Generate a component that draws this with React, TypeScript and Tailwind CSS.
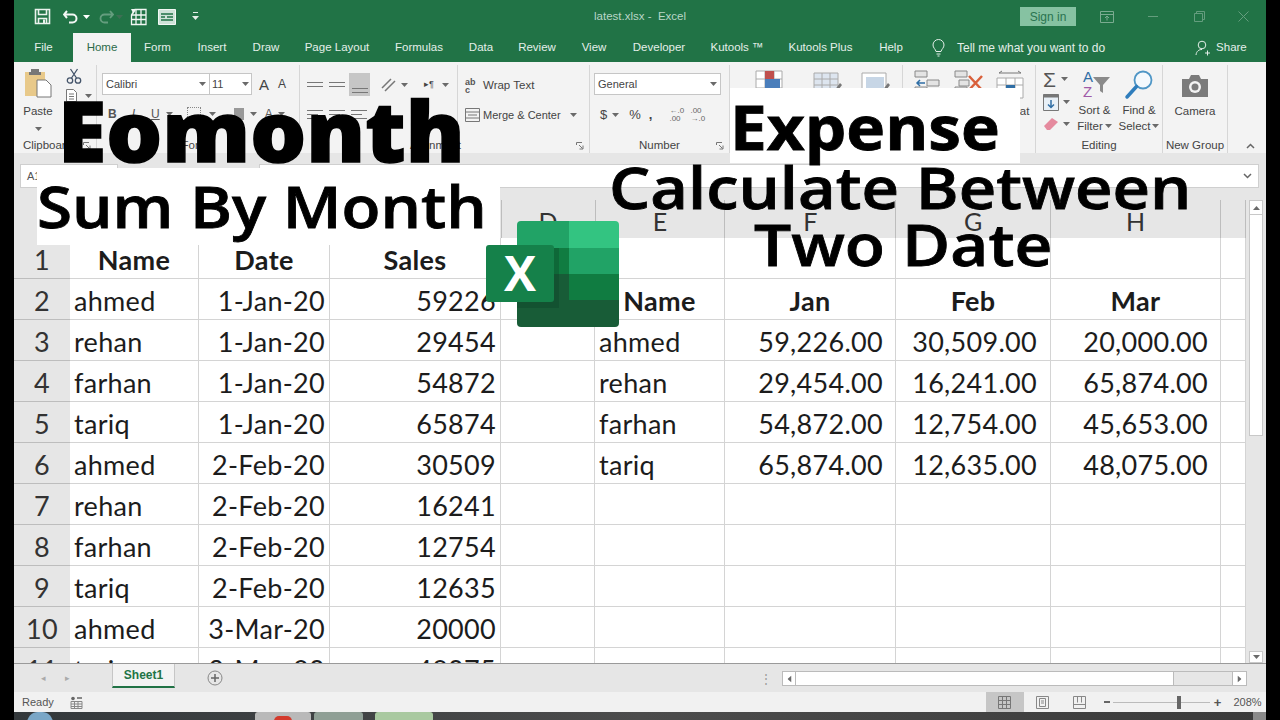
import type { ReactNode } from 'react'

const ui = "font-['Liberation_Sans',Arial,sans-serif]"
const cell = "font-['Lato','Liberation_Sans',sans-serif]"

const tabs = [
  { label: 'File', w: 'w-[59px]' },
  { label: 'Home', w: 'w-[58px]', active: true },
  { label: 'Form', w: 'w-[53px]' },
  { label: 'Insert', w: 'w-[56px]' },
  { label: 'Draw', w: 'w-[52px]' },
  { label: 'Page Layout', w: 'w-[90px]' },
  { label: 'Formulas', w: 'w-[74px]' },
  { label: 'Data', w: 'w-[50px]' },
  { label: 'Review', w: 'w-[62px]' },
  { label: 'View', w: 'w-[52px]' },
  { label: 'Developer', w: 'w-[78px]' },
  { label: 'Kutools ™', w: 'w-[78px]' },
  { label: 'Kutools Plus', w: 'w-[89px]' },
  { label: 'Help', w: 'w-[52px]' },
]

const columns = [
  { label: 'D', w: 'w-[94px]' },
  { label: 'E', w: 'w-[130px]' },
  { label: 'F', w: 'w-[171px]' },
  { label: 'G', w: 'w-[155px]' },
  { label: 'H', w: 'w-[170px]' },
  { label: '', w: 'w-[25px]' },
]

const sales = [
  ['ahmed', '1-Jan-20', '59226'],
  ['rehan', '1-Jan-20', '29454'],
  ['farhan', '1-Jan-20', '54872'],
  ['tariq', '1-Jan-20', '65874'],
  ['ahmed', '2-Feb-20', '30509'],
  ['rehan', '2-Feb-20', '16241'],
  ['farhan', '2-Feb-20', '12754'],
  ['tariq', '2-Feb-20', '12635'],
  ['ahmed', '3-Mar-20', '20000'],
  ['tariq', '3-Mar-20', '48075'],
]

const summary = [
  ['ahmed', '59,226.00', '30,509.00', '20,000.00'],
  ['rehan', '29,454.00', '16,241.00', '65,874.00'],
  ['farhan', '54,872.00', '12,754.00', '45,653.00'],
  ['tariq', '65,874.00', '12,635.00', '48,075.00'],
]

function Caret({ className = '' }: { className?: string }) {
  return (
    <svg width="7" height="4" viewBox="0 0 7 4" className={className}>
      <path d="M0 0h7L3.5 4z" fill="#6a6a6a" />
    </svg>
  )
}

function Lines({ bars }: { bars: number[] }) {
  return (
    <div className="flex w-[16px] flex-col gap-[3px]">
      {bars.map((b, i) => (
        <div key={i} className={b === 1 ? 'h-px w-full bg-[#777]' : 'h-px w-[11px] bg-[#777]'} />
      ))}
    </div>
  )
}

function Group({
  label,
  width,
  labelPad = '',
  launcher = false,
  children,
}: {
  label: string
  width: string
  labelPad?: string
  launcher?: boolean
  children: ReactNode
}) {
  return (
    <div className={width + ' flex h-[88px] flex-col border-r border-[#d6d6d6]'}>
      <div className="h-[72px] overflow-hidden">{children}</div>
      <div className={'relative h-[16px] text-center text-[11.5px] leading-[16px] text-[#444] ' + labelPad}>
        {label}
        {launcher && (
          <svg width="8" height="8" viewBox="0 0 8 8" className="absolute bottom-[3px] right-[5px]">
            <path d="M.5 3V.5H6M3 3l3.5 3.5M3.5 7H7V3.5" fill="none" stroke="#777" />
          </svg>
        )}
      </div>
    </div>
  )
}

function TitleBar() {
  return (
    <div className="flex h-[33px] items-center bg-[#217346] text-white">
      <svg width="17" height="17" viewBox="0 0 17 17" className="ml-[20px]">
        <path d="M1.5 1.5h14v14h-14zM4.5 1.5v5h8v-5M4.5 15.5v-5h8v5" fill="none" stroke="#e9f3ed" strokeWidth="1.6" />
        <path d="M9 11.5h2v4H9z" fill="#e9f3ed" />
      </svg>
      <svg width="18" height="14" viewBox="0 0 18 14" className="ml-[12px]">
        <path d="M4 1L1 4.5 4 8M1 4.5h8.5a3.8 3.8 0 0 1 0 8H6" fill="none" stroke="#f2f7f4" strokeWidth="2" />
      </svg>
      <Caret className="ml-[2px] brightness-[3]" />
      <svg width="16" height="14" viewBox="0 0 16 14" className="ml-[8px] opacity-30">
        <path d="M12 1l3 3.5L12 8M15 4.5H6.5a3.8 3.8 0 0 0 0 8H10" fill="none" stroke="#fff" strokeWidth="1.8" />
      </svg>
      <Caret className="ml-[2px] opacity-40" />
      <svg width="17" height="18" viewBox="0 0 17 18" className="ml-[7px]">
        <path d="M5 1.5h11v15H1.5V7zM1.5 7H16M1.5 11.5H16M6 1.5v15M11 1.5v15" fill="none" stroke="#f2f7f4" strokeWidth="1.3" />
        <path d="M1 1h5L3.5 6z" fill="#f2f7f4" />
      </svg>
      <svg width="18" height="16" viewBox="0 0 18 16" className="ml-[11px]">
        <path d="M.5.5h17v15H.5z" fill="#cfe3d8" stroke="#f2f7f4" />
        <path d="M3 5h12M3 8h4M9 8h6M3 11h12" stroke="#217346" strokeWidth="1.4" />
      </svg>
      <svg width="7" height="9" viewBox="0 0 7 9" className="ml-[16px]">
        <path d="M1 0h5v1H1zM0 4h7L3.5 8z" fill="#e3efe8" />
      </svg>
      <div className="ml-[395px] whitespace-nowrap text-[11.5px] text-[#b9d6c6]">latest.xlsx&nbsp;- &nbsp;Excel</div>
      <div className="ml-[334px] flex h-[19px] w-[56px] items-center justify-center bg-[#86c2a2] text-[12px] text-[#2a7450]">
        Sign in
      </div>
      <svg width="14" height="12" viewBox="0 0 14 12" className="ml-[24px] opacity-40">
        <path d="M.5.5h13v11H.5zM.5 3.5h13M7 9.5V5M5 7l2-2 2 2" fill="none" stroke="#fff" />
      </svg>
      <div className="ml-[34px] h-px w-[10px] bg-white opacity-30" />
      <svg width="11" height="11" viewBox="0 0 11 11" className="ml-[36px] opacity-30">
        <path d="M.5 2.5h8v8h-8zM2.5 2.5v-2h8v8h-2" fill="none" stroke="#fff" />
      </svg>
      <svg width="11" height="11" viewBox="0 0 11 11" className="ml-[33px] opacity-30">
        <path d="M.5.5l10 10M10.500.5l-10 10" fill="none" stroke="#fff" />
      </svg>
    </div>
  )
}

function TabRow() {
  return (
    <div className="flex h-[29px] bg-[#217346] text-[11.5px] text-[#e4efe9]">
      {tabs.map(t => (
        <div
          key={t.label}
          className={
            t.w +
            ' flex items-center justify-center whitespace-nowrap ' +
            (t.active ? 'bg-[#f3f3f3] text-[#2c6a49]' : '')
          }
        >
          {t.label}
        </div>
      ))}
      <div className="flex items-center">
        <svg width="13" height="18" viewBox="0 0 13 18" className="ml-[15px]">
          <path d="M4 12.5C3.500 10 1 9 1 6a5.500 5.500 0 0 1 11 0c0 3-2.500 4-3 6.500zM4.500 15h4M5.500 17h2" fill="none" stroke="#e4efe9" />
        </svg>
        <span className="ml-[12px] whitespace-nowrap text-[12px]">Tell me what you want to do</span>
        <svg width="16" height="16" viewBox="0 0 16 16" className="ml-[90px]">
          <circle cx="7" cy="5" r="3.8" fill="none" stroke="#e4efe9" />
          <path d="M1 15c.5-4 3-5.500 6-5.500M10 13h5M12.500 10.500v5" fill="none" stroke="#e4efe9" />
        </svg>
        <span className="ml-[5px] text-[11.5px]">Share</span>
      </div>
    </div>
  )
}

function Ribbon() {
  return (
    <div className={'flex h-[91px] bg-[#f3f3f3] pt-[3px] text-[#444] ' + ui}>
      <Group label="Clipboard" width="w-[83px]" labelPad="pr-[15px]" launcher>
        <div className="flex">
          <div className="flex w-[48px] flex-col items-center pt-[3px]">
            <svg width="28" height="30" viewBox="0 0 28 30">
              <path d="M1 4h20v24H1z" fill="#e8c98a" />
              <path d="M7 4h8V1h-8zM5 4h12v3H5z" fill="#777" />
              <path d="M13 12h9l5 5v12H13z" fill="#fff" stroke="#777" />
            </svg>
            <span className="mt-[5px] text-[11.5px]">Paste</span>
            <Caret className="mt-[7px]" />
          </div>
          <div className="flex flex-col pt-[3px] pl-[4px]">
            <svg width="16" height="16" viewBox="0 0 16 16">
              <circle cx="4" cy="12.5" r="2.7" fill="none" stroke="#44546a" strokeWidth="1.3" />
              <circle cx="12" cy="12.5" r="2.7" fill="none" stroke="#44546a" strokeWidth="1.3" />
              <path d="M5.500 10L11.500 1M10.500 10L4.500 1" fill="none" stroke="#44546a" strokeWidth="1.3" />
            </svg>
            <div className="mt-[5px] flex items-center gap-[4px]">
              <svg width="15" height="14" viewBox="0 0 15 14">
                <path d="M.5.5h7l3 3v9H.5zM3 5h5M3 7.500h5M3 10h5" fill="#fff" stroke="#777" />
              </svg>
              <Caret />
            </div>
          </div>
        </div>
      </Group>

      <Group label="Font" width="w-[203px]" labelPad="pr-[10px]" launcher>
        <div className="mt-[8px] flex h-[22px] items-center pl-[5px]">
          <div className="flex h-[22px] w-[108px] items-center justify-between border border-[#c6c6c6] bg-white px-[3px] text-[11px]">
            Calibri
            <Caret />
          </div>
          <div className="flex h-[22px] w-[42px] items-center justify-between border border-l-0 border-[#c6c6c6] bg-white px-[2px] text-[11px]">
            11
            <Caret />
          </div>
          <span className="ml-[7px] text-[15px] leading-none">A</span>
          <span className="ml-[9px] text-[12px] leading-none">A</span>
        </div>
        <div className="mt-[10px] flex items-center pl-[10px] text-[12px] text-[#555]">
          <b className="ml-[1px]">B</b>
          <i className="ml-[15px]">I</i>
          <u className="ml-[16px]">U</u>
          <Caret className="ml-[6px]" />
          <div className="ml-[14px] h-[14px] w-[14px] border border-dotted border-[#888]" />
          <Caret className="ml-[8px]" />
          <div className="ml-[18px] h-[12px] w-[10px] bg-[#999]" />
          <Caret className="ml-[6px]" />
          <span className="ml-[8px]">A</span>
          <Caret className="ml-[5px]" />
        </div>
      </Group>

      <Group label="Alignment" width="w-[290px]" labelPad="pr-[18px]" launcher>
        <div className="flex">
          <div className="w-[157px]">
            <div className="mt-[8px] flex h-[23px] items-center pl-[7px]">
              <Lines bars={[1, 1]} />
              <div className="ml-[6px]">
                <Lines bars={[1, 1]} />
              </div>
              <div className="ml-[4px] flex h-[23px] w-[21px] items-end justify-center bg-[#c6c6c6] pb-[3px]">
                <Lines bars={[1, 1]} />
              </div>
              <svg width="17" height="15" viewBox="0 0 17 15" className="ml-[11px]">
                <path d="M1 11L10 2M4 14L14 4" fill="none" stroke="#777" strokeWidth="1.5" />
              </svg>
              <Caret className="ml-[3px]" />
              <span className="ml-[16px] text-[9px]">▸¶</span>
              <Caret className="ml-[8px]" />
            </div>
            <div className="mt-[11px] flex h-[14px] items-center pl-[7px]">
              <Lines bars={[1, 0, 1]} />
              <div className="ml-[6px]">
                <Lines bars={[1, 0, 1]} />
              </div>
              <div className="ml-[6px]">
                <Lines bars={[1, 0, 1]} />
              </div>
            </div>
          </div>
          <div className="h-[64px] border-l border-[#d6d6d6] pl-[7px]">
            <div className="mt-[12px] flex h-[18px] items-center">
              <span className="w-[15px] text-[9px] font-bold leading-[8px] text-[#555]">ab c</span>
              <span className="ml-[3px] text-[11.5px]">Wrap Text</span>
            </div>
            <div className="mt-[11px] flex h-[18px] items-center">
              <svg width="15" height="14" viewBox="0 0 15 14">
                <path d="M.5.5h14v13H.5zM.5 4h14M.5 10h14M3 7h9" fill="none" stroke="#777" />
              </svg>
              <span className="ml-[3px] whitespace-nowrap text-[11px]">Merge &amp; Center</span>
              <Caret className="ml-[9px]" />
            </div>
          </div>
        </div>
      </Group>

      <Group label="Number" width="w-[140px]" launcher>
        <div className="ml-[4px] mt-[8px] flex h-[22px] w-[127px] items-center justify-between border border-[#c6c6c6] bg-white px-[3px] text-[11px]">
          General
          <Caret />
        </div>
        <div className="mt-[10px] flex h-[20px] items-center pl-[10px] text-[13px]">
          <span>$</span>
          <Caret className="ml-[5px]" />
          <span className="ml-[10px]">%</span>
          <b className="ml-[8px]">,</b>
          <span className="ml-[17px] w-[18px] text-[8px] leading-[8px] text-[#666]">←.0 .00</span>
          <span className="ml-[3px] w-[18px] text-[8px] leading-[8px] text-[#666]">.00 →.0</span>
        </div>
      </Group>

      <Group label="Styles" width="w-[173px]">
        <div className="flex pl-[25px] pt-[5px]">
          <svg width="28" height="28" viewBox="0 0 28 28">
            <path d="M1 1h26v26H1zM1 9h26M1 18h26M10 1v26M19 1v26" fill="#fff" stroke="#aaa" />
            <path d="M10 1h9v8h-9z" fill="#c0504d" />
            <path d="M10 9h15v9H10z" fill="#4a7ebb" />
            <path d="M10 18h8v9h-8z" fill="#c0504d" />
          </svg>
          <svg width="30" height="28" viewBox="0 0 30 28" className="ml-[30px]">
            <path d="M1 3h24v22H1zM1 9h24M1 15h24M9 3v22M17 3v22" fill="#dde5ef" stroke="#aaa" />
            <path d="M18 25l9-12 2 2-9 12z" fill="#777" />
          </svg>
          <svg width="30" height="28" viewBox="0 0 30 28" className="ml-[18px]">
            <path d="M1 3h24v22H1z" fill="#fff" stroke="#aaa" />
            <path d="M5 7h18v15H5z" fill="#c7d6e6" />
            <path d="M18 25l9-12 2 2-9 12z" fill="#777" />
          </svg>
        </div>
      </Group>

      <Group label="Cells" width="w-[133px]">
        <div className="flex pl-[11px] pt-[5px]">
          <svg width="27" height="24" viewBox="0 0 27 24">
            <path d="M1 1h12v6H1zM1 17h12v6H1zM13 10h12v6H13z" fill="#e4e4e4" stroke="#888" />
            <path d="M11 13H3M6 10l-3 3 3 3" fill="none" stroke="#2f6ea5" strokeWidth="1.5" />
          </svg>
          <svg width="30" height="24" viewBox="0 0 30 24" className="ml-[13px]">
            <path d="M1 1h12v6H1zM1 17h12v6H1zM5 10h10v6H5z" fill="#e4e4e4" stroke="#888" />
            <path d="M15 6l13 14M28 6L15 20" stroke="#d9603b" strokeWidth="2.5" />
          </svg>
          <svg width="28" height="30" viewBox="0 0 28 30" className="ml-[12px]">
            <path d="M1 8h26v20H1zM1 15h26M10 8v20M19 8v20" fill="#fff" stroke="#aaa" />
            <path d="M10 15h9v9h-9z" fill="#2f6ea5" />
            <path d="M3 3h22M3 3l3-2M25 3l-3-2" fill="none" stroke="#777" />
          </svg>
        </div>
        <div className="mt-[3px] pl-[90px] text-[11.5px]">Format</div>
      </Group>

      <Group label="Editing" width="w-[127px]">
        <div className="flex">
          <div className="flex w-[35px] flex-col pl-[7px] pt-[3px]">
            <div className="flex h-[22px] items-center">
              <span className="text-[21px] leading-none text-[#555]">Σ</span>
              <Caret className="ml-[5px]" />
            </div>
            <div className="flex h-[24px] items-center">
              <svg width="16" height="17" viewBox="0 0 16 17">
                <path d="M.5.5h15v16H.5z" fill="#e8f0f7" stroke="#777" />
                <path d="M.5.5h15v3H.5z" fill="#777" />
                <path d="M8 6v7M5 10.500l3 3 3-3" fill="none" stroke="#2f6ea5" strokeWidth="1.5" />
              </svg>
              <Caret className="ml-[4px]" />
            </div>
            <div className="flex h-[20px] items-center">
              <svg width="16" height="14" viewBox="0 0 16 14">
                <path d="M1 9l8-8 6 4-8 8H4z" fill="#e58a9e" />
              </svg>
              <Caret className="ml-[4px]" />
            </div>
          </div>
          <div className="flex w-[47px] flex-col items-center pt-[4px]">
            <svg width="30" height="30" viewBox="0 0 30 30">
              <text x="3" y="13" fontSize="15" fontFamily="Liberation Sans" fill="#2f6ea5">A</text>
              <text x="3" y="28" fontSize="15" fontFamily="Liberation Sans" fill="#a05aa8">Z</text>
              <path d="M13 8h17l-7 8v8l-3-2v-6z" fill="#8a8a8a" />
            </svg>
            <span className="mt-[3px] whitespace-nowrap text-[11.5px] leading-[16px]">Sort &amp;</span>
            <span className="flex items-center whitespace-nowrap text-[11.5px] leading-[16px]">
              Filter
              <Caret className="ml-[2px]" />
            </span>
          </div>
          <div className="flex w-[42px] flex-col items-center pt-[4px]">
            <svg width="30" height="32" viewBox="0 0 30 32">
              <circle cx="19" cy="11" r="8.5" fill="#f4f9fd" stroke="#4f96c6" strokeWidth="1.8" />
              <path d="M12.500 17.500L3 28" stroke="#2f7dbc" strokeWidth="3.5" strokeLinecap="round" />
            </svg>
            <span className="mt-[1px] whitespace-nowrap text-[11.5px] leading-[16px]">Find &amp;</span>
            <span className="flex items-center whitespace-nowrap text-[11.5px] leading-[16px]">
              Select
              <Caret className="ml-[2px]" />
            </span>
          </div>
        </div>
      </Group>

      <div className="flex h-[88px] w-[65px] flex-col items-center border-r border-[#d6d6d6]">
        <div className="h-[72px] pt-[9px] text-center">
          <svg width="28" height="24" viewBox="0 0 28 24" className="mx-auto">
            <path d="M1 5h7l2-4h8l2 4h7v18H1z" fill="#7b7b7b" />
            <circle cx="14" cy="13" r="6" fill="#f3f3f3" />
            <circle cx="14" cy="13" r="3.5" fill="#7b7b7b" />
          </svg>
          <div className="mt-[5px] text-[11.5px]">Camera</div>
        </div>
        <div className="h-[16px] whitespace-nowrap text-[11.5px] leading-[16px]">New Group</div>
      </div>

      <div className="flex h-[88px] flex-1 items-end justify-end pb-[4px] pr-[11px]">
        <svg width="9" height="6" viewBox="0 0 9 6">
          <path d="M1 5l3.500-3.500L8 5" fill="none" stroke="#666" strokeWidth="1.5" />
        </svg>
      </div>
    </div>
  )
}

function FormulaBar() {
  return (
    <div className={'flex h-[35px] bg-[#e6e6e6] pt-[11px] text-[11px] text-[#555] ' + ui}>
      <div className="ml-[6px] flex h-[24px] w-[98px] items-center border border-[#cfcfcf] bg-white pl-[6px]">A1</div>
      <div className="ml-[141px] flex h-[24px] w-[1000px] items-center justify-end border border-[#cfcfcf] bg-white pr-[6px]">
        <svg width="9" height="6" viewBox="0 0 9 6">
          <path d="M1 1l3.500 3.500L8 1" fill="none" stroke="#666" strokeWidth="1.5" />
        </svg>
      </div>
    </div>
  )
}

function Sheet() {
  return (
    <div className={'flex h-[475px] bg-[#e6e6e6] ' + cell}>
      <div className="mt-[12px] w-[1232px] overflow-hidden">
        <div className="flex h-[38px] text-[25px] text-[#333]">
          <div className="w-[186px]" />
          <div className="w-[131px]" />
          <div className="w-[171px] border-r border-[#bdbdbd]" />
          {columns.map(c => (
            <div key={c.w + c.label} className={c.w + ' flex items-end justify-center border-r border-[#bdbdbd] leading-[34px]'}>
              {c.label}
            </div>
          ))}
        </div>
        {Array.from({ length: 11 }, (_, i) => (
          <SheetRow key={i} index={i} />
        ))}
      </div>
      <Scrollbar />
    </div>
  )
}

function Td({ w, children, className = '' }: { w: string; children?: ReactNode; className?: string }) {
  return (
    <div className={w + ' flex h-full items-center border-r border-b border-[#d4d4d4] bg-white pt-[4px] whitespace-nowrap ' + className}>
      {children}
    </div>
  )
}

function SheetRow({ index }: { index: number }) {
  const row = index === 0 ? null : sales[index - 1]
  const side = index >= 2 ? summary[index - 2] : null
  const head = index === 1
  return (
    <div className="flex h-[41px] text-[27px] tracking-[0.3px] text-[#1c1c1c]">
      <div className="flex h-full w-[56px] items-center justify-center border-b border-[#bdbdbd] pt-[4px] text-[#333]">{index + 1}</div>
      <Td w="w-[129px]" className={row ? 'pl-[4px]' : 'justify-center font-bold'}>{row ? row[0] : 'Name'}</Td>
      <Td w="w-[131px]" className={row ? 'justify-end pr-[4px]' : 'justify-center font-bold'}>{row ? row[1] : 'Date'}</Td>
      <Td w="w-[171px]" className={row ? 'justify-end pr-[4px]' : 'justify-center font-bold'}>{row ? row[2] : 'Sales'}</Td>
      <Td w="w-[94px]" />
      <Td w="w-[130px]" className={head ? 'justify-center font-bold' : 'pl-[4px]'}>{head ? 'Name' : side?.[0]}</Td>
      <Td w="w-[171px]" className={head ? 'justify-center font-bold' : 'justify-end pr-[12px]'}>{head ? 'Jan' : side?.[1]}</Td>
      <Td w="w-[155px]" className={head ? 'justify-center font-bold' : 'justify-end pr-[13px]'}>{head ? 'Feb' : side?.[2]}</Td>
      <Td w="w-[170px]" className={head ? 'justify-center font-bold' : 'justify-end pr-[12px]'}>{head ? 'Mar' : side?.[3]}</Td>
      <Td w="w-[25px]" />
    </div>
  )
}

function Scrollbar() {
  return (
    <div className="ml-[3px] mt-[12px] flex h-[463px] w-[14px] flex-col">
      <div className="flex h-[15px] items-center justify-center border border-[#c8c8c8] bg-white">
        <Caret className="rotate-180" />
      </div>
      <div className="h-[221px] border-x border-b border-[#c8c8c8] bg-white" />
      <div className="flex-1" />
      <div className="flex h-[12px] items-center justify-center border border-[#c8c8c8] bg-white">
        <Caret />
      </div>
    </div>
  )
}

function SheetTabs() {
  return (
    <div className={'flex h-[29px] items-start border-t border-[#9a9a9a] bg-[#e6e6e6] ' + ui}>
      <span className="ml-[27px] mt-[8px] text-[9px] text-[#aaa]">◂</span>
      <span className="ml-[19px] mt-[8px] text-[9px] text-[#aaa]">▸</span>
      <div className="ml-[42px] flex h-[24px] w-[63px] items-center justify-center border-x border-b-2 border-[#c6c6c6] border-b-[#217346] bg-[#f3f3f3] text-[12px] font-bold text-[#217346]">
        Sheet1
      </div>
      <svg width="16" height="16" viewBox="0 0 16 16" className="ml-[32px] mt-[6px]">
        <circle cx="8" cy="8" r="7" fill="none" stroke="#888" />
        <path d="M8 4v8M4 8h8" stroke="#666" strokeWidth="1.5" />
      </svg>
      <span className="ml-[537px] mt-[8px] text-[12px] leading-[14px] text-[#999]">⋮</span>
      <div className="ml-[10px] mt-[7px] flex h-[15px] w-[465px] items-stretch border border-[#bbb]">
        <div className="flex w-[13px] items-center justify-center border-r border-[#bbb] bg-white">
          <Caret className="rotate-90" />
        </div>
        <div className="w-[378px] border-r border-[#bbb] bg-white" />
        <div className="flex-1" />
        <div className="flex w-[14px] items-center justify-center border-l border-[#bbb] bg-white">
          <Caret className="-rotate-90" />
        </div>
      </div>
    </div>
  )
}

function StatusBar() {
  return (
    <div className={'flex h-[20px] items-center bg-[#f1f1f1] text-[11px] text-[#555] ' + ui}>
      <span className="ml-[8px]">Ready</span>
      <svg width="13" height="13" viewBox="0 0 13 13" className="ml-[16px]">
        <path d="M1 5.500h11v7H1zM1 8h11M1 10.500h11M4.500 5.500v7M8 5.500v7" fill="none" stroke="#888" />
        <circle cx="3" cy="2.5" r="1.8" fill="#666" />
        <path d="M7 1h5v2H7z" fill="#888" />
      </svg>
      <div className="ml-[903px] flex h-full w-[38px] items-center justify-center bg-[#c6c6c6]">
        <svg width="13" height="13" viewBox="0 0 13 13">
          <path d="M.5.5h12v12H.5zM.5 4.500h12M.5 8.500h12M4.500.5v12M8.500.5v12" fill="none" stroke="#777" />
        </svg>
      </div>
      <svg width="13" height="13" viewBox="0 0 13 13" className="ml-[12px]">
        <path d="M.5.5h12v12H.5z" fill="none" stroke="#888" />
        <path d="M3.500 2.500h6v8h-6zM5 5h3M5 7h3" fill="none" stroke="#888" />
      </svg>
      <svg width="13" height="13" viewBox="0 0 13 13" className="ml-[24px]">
        <path d="M.5.5h12v12H.5zM.5 8.500h12M4.500.5v6M8.500.5v6" fill="none" stroke="#888" />
      </svg>
      <div className="ml-[18px] h-[2px] w-[6px] bg-[#666]" />
      <div className="relative ml-[3px] h-px w-[97px] bg-[#bbb]">
        <div className="absolute left-[64px] top-[-6px] h-[13px] w-[4px] bg-[#666]" />
      </div>
      <span className="ml-[4px] text-[13px] font-bold leading-none text-[#555]">+</span>
      <span className="ml-[12px] text-[11px]">208%</span>
    </div>
  )
}

function Taskbar() {
  return (
    <div className="flex h-[8px] overflow-hidden bg-gradient-to-r from-[#33383b] via-[#4c4c4c] to-[#3a3a3a]">
      <div className="ml-[13px] h-[22px] w-[26px] rounded-full bg-[#7aa7c7]" />
      <div className="ml-[202px] flex h-full w-[56px] justify-center rounded-t-[3px] bg-[#b9b9b9]">
        <div className="mt-[4px] h-[10px] w-[18px] rounded-full bg-[#d33a2c]" />
      </div>
      <div className="ml-[3px] h-full w-[49px] rounded-t-[3px] bg-[#8f9f95]" />
      <div className="ml-[12px] h-full w-[58px] rounded-t-[3px] bg-[#a9c9a0]" />
      <div className="ml-auto h-full w-[13px] bg-[#8a8a8a]" />
    </div>
  )
}

function ExcelLogo() {
  return (
    <svg width="135" height="107" viewBox="0 0 135 107" className="absolute left-[486px] top-[221px]">
      <defs>
        <clipPath id="sheet">
          <rect x="31" y="0" width="102" height="106" rx="4" />
        </clipPath>
      </defs>
      <g clipPath="url(#sheet)">
        <path d="M31 0h52v27H31z" fill="#21a366" />
        <path d="M83 0h50v27H83z" fill="#33c481" />
        <path d="M31 27h52v26H31z" fill="#107c41" />
        <path d="M83 27h50v26H83z" fill="#21a366" />
        <path d="M31 53h52v26H31z" fill="#185c37" />
        <path d="M83 53h50v26H83z" fill="#107c41" />
        <path d="M31 79h102v27H31z" fill="#185c37" />
        <path d="M31 27h42v60H31z" fill="#0b3d23" opacity="0.3" />
      </g>
      <rect x="0" y="24" width="68" height="57" rx="3" fill="#15814a" />
      <text x="34" y="70" textAnchor="middle" fontSize="48" fontWeight="700" fontFamily="Open Sans" fill="#fff">X</text>
    </svg>
  )
}

export default function App() {
  const title = "font-['Open_Sans',sans-serif] text-black whitespace-nowrap origin-left "
  return (
    <div className="relative h-[720px] w-[1280px] overflow-hidden bg-black">
      <div className={'ml-[14px] flex h-[720px] w-[1252px] flex-col ' + ui}>
        <TitleBar />
        <TabRow />
        <Ribbon />
        <FormulaBar />
        <div className="h-[475px] shrink-0 overflow-hidden">
          <Sheet />
        </div>
        <SheetTabs />
        <StatusBar />
        <Taskbar />
      </div>

      <div className="absolute left-[37px] top-[168px] h-[77px] w-[463px] bg-white" />
      <div className="absolute left-[730px] top-[88px] h-[75px] w-[290px] bg-white" />

      <div className={title + 'absolute left-[58px] top-[73px] scale-x-[1.047] text-[84px] font-extrabold leading-[114px] [-webkit-text-stroke:1.5px_black]'}>Eomonth</div>
      <div className={title + 'absolute left-[37px] top-[166px] scale-x-[1.1] text-[58px] font-semibold leading-[80px] [-webkit-text-stroke:0.8px_black]'}>Sum By Month</div>
      <div className={title + 'absolute left-[730px] top-[86px] scale-x-[1.095] text-[60px] font-bold leading-[82px] [-webkit-text-stroke:0.8px_black]'}>Expense</div>
      <div className={title + 'absolute left-[609px] top-[147px] scale-x-[1.122] text-[58px] font-semibold leading-[80px] [-webkit-text-stroke:0.8px_black]'}>Calculate Between</div>
      <div className={title + 'absolute left-[754px] top-[204px] scale-x-[1.134] text-[58px] font-semibold leading-[80px] [-webkit-text-stroke:0.8px_black]'}>Two Date</div>

      <ExcelLogo />
    </div>
  )
}
